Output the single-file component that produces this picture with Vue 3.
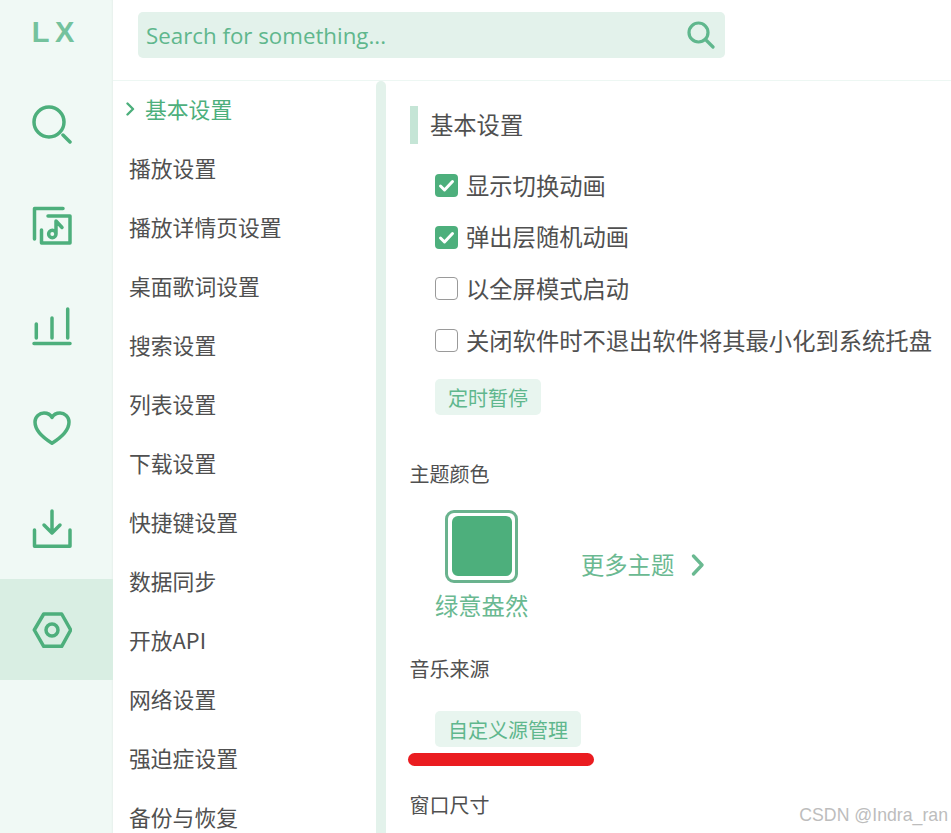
<template>
  <div class="app">
    <aside class="sidebar">
      <div class="logo">L X</div>
      <div
        v-for="item in navItems"
        :key="item.id"
        class="nav-item"
        :class="{ active: item.id === 'setting' }"
      >
        <svg class="nav-icon" viewBox="0 0 40 40" width="40" height="40">
          <path :d="item.d" />
        </svg>
      </div>
    </aside>

    <main class="main">
      <header class="topbar">
        <div class="search">
          <span class="search-text">Search for something...</span>
          <svg class="search-icon" viewBox="0 0 28 28" width="28" height="28">
            <path d="M11.500 2a9.500 9.500 0 1 0 0 19a9.500 9.500 0 1 0 0-19M18.500 18.500l7.500 7.500" />
          </svg>
        </div>
      </header>

      <div class="body">
        <nav class="menu">
          <div
            v-for="(name, index) in menuItems"
            :key="name"
            class="menu-item"
            :class="{ current: index === 0 }"
          >
            <svg v-if="index === 0" class="menu-arrow" viewBox="0 0 9 14" width="9" height="14">
              <path d="M1.500 1.500L7 7L1.500 12.500" />
            </svg>
            {{ name }}
          </div>
        </nav>
        <div class="scrollbar"></div>

        <section class="content">
          <h2 class="heading">基本设置</h2>

          <div class="checks">
            <label v-for="opt in options" :key="opt.label" class="check">
              <span class="box" :class="{ on: opt.on }">
                <svg v-if="opt.on" viewBox="0 0 23 23" width="23" height="23">
                  <path d="M5.500 12l4 4l8-8.500" />
                </svg>
              </span>
              <span class="check-text">{{ opt.label }}</span>
            </label>
          </div>
          <button class="btn timer-btn">定时暂停</button>

          <div class="label theme-label">主题颜色</div>
          <div class="themes">
            <div class="theme">
              <div class="swatch"><div class="swatch-fill"></div></div>
              <div class="theme-name">绿意盎然</div>
            </div>
            <div class="more">
              <span class="more-text">更多主题</span>
              <svg class="more-arrow" viewBox="0 0 14 22" width="14" height="22">
                <path d="M2.500 2L11 11L2.500 20" />
              </svg>
            </div>
          </div>

          <div class="label source-label">音乐来源</div>
          <button class="btn source-btn">自定义源管理</button>

          <div class="label size-label">窗口尺寸</div>
        </section>
      </div>
    </main>

    <div class="red-mark"></div>
    <div class="watermark">CSDN @Indra_ran</div>
  </div>
</template>

<script setup>
const navItems = [
  { id: 'search', d: 'M17 2a15 15 0 1 0 0 30a15 15 0 1 0 0-30M31 30l7 7' },
  {
    id: 'list',
    d: 'M2.500 33V2.500H31M16 10H38V37H9.500V24M24 28a3.700 3.700 0 1 1-7.400 0a3.700 3.700 0 1 1 7.400 0V15L30 21.500'
  },
  { id: 'top', d: 'M4.300 17V31M20 11V31M35.700 2V31M2 36.500H38' },
  {
    id: 'love',
    d: 'M20 35.200C14 31.500 3 24.500 3 14C3 8.500 7.500 5 12 5C15.500 5 18.500 6.700 20 9.500C21.500 6.700 24.500 5 28 5C32.500 5 37 8.500 37 14C37 24.500 26 31.500 20 35.200Z'
  },
  { id: 'download', d: 'M20 2V23.700M12 16L20 24L28 16M2.500 21V37.300H38V21' },
  {
    id: 'setting',
    d: 'M2.300 20L11.700 4H29.700L38.700 20L29.700 36.300H11.700ZM26 20a6 6 0 1 1-12 0a6 6 0 1 1 12 0'
  }
]

const menuItems = [
  '基本设置',
  '播放设置',
  '播放详情页设置',
  '桌面歌词设置',
  '搜索设置',
  '列表设置',
  '下载设置',
  '快捷键设置',
  '数据同步',
  '开放API',
  '网络设置',
  '强迫症设置',
  '备份与恢复'
]

const options = [
  { label: '显示切换动画', on: true },
  { label: '弹出层随机动画', on: true },
  { label: '以全屏模式启动', on: false },
  { label: '关闭软件时不退出软件将其最小化到系统托盘', on: false }
]
</script>

<style>
html, body { margin: 0; height: 100%; overflow: hidden; background: #fff; }
</style>

<style scoped>
.app {
  position: relative;
  display: flex;
  width: 951px;
  height: 833px;
  overflow: hidden;
  background: #fff;
  color: #505050;
  font-family: "Noto Sans CJK SC", "Noto Sans", sans-serif;
}
.sidebar {
  flex: none;
  width: 113px;
  background: #f0f9f5;
  box-shadow: inset -2px 0 2px -1px rgba(0, 0, 0, 0.04);
}
.logo {
  height: 64px;
  padding: 10px 7px 0 0;
  text-align: center;
  font: bold 29px/45px "Liberation Sans", sans-serif;
  color: #74c29d;
  word-spacing: -2px;
}
.nav-item {
  display: flex;
  align-items: center;
  justify-content: center;
  height: 101px;
  padding-right: 9px;
}
.nav-item.active { background: #d9eee3; }
.nav-icon path {
  fill: none;
  stroke: #4daf7c;
  stroke-width: 3.500;
  stroke-linecap: round;
  stroke-linejoin: round;
}
.main { flex: 1; display: flex; flex-direction: column; min-width: 0; }
.topbar {
  flex: none;
  height: 68px;
  padding: 12px 0 0 25px;
  border-bottom: 1px solid #edf7f3;
}
.search {
  display: flex;
  align-items: center;
  justify-content: space-between;
  width: 587px;
  height: 46px;
  padding: 0 10px 0 8px;
  box-sizing: border-box;
  border-radius: 5px;
  background: #e3f2eb;
}
.search-text {
  font-family: "Open Sans", sans-serif;
  font-size: 22.300px;
  color: #5fb78d;
}
.search-icon path {
  fill: none;
  stroke: #5fb78d;
  stroke-width: 3.200;
  stroke-linecap: round;
}
.body { flex: 1; display: flex; min-height: 0; }
.menu { flex: none; width: 263px; margin-top: -1.500px; }
.menu-item {
  display: flex;
  align-items: center;
  height: 58.950px;
  padding-left: 16px;
  font-size: 21.800px;
  white-space: nowrap;
}
.menu-item.current { padding-left: 13px; color: #4daf7c; }
.menu-arrow { margin-right: 10px; }
.menu-arrow path {
  fill: none;
  stroke: #4daf7c;
  stroke-width: 2.400;
  stroke-linecap: round;
  stroke-linejoin: round;
}
.scrollbar {
  flex: none;
  width: 10px;
  border-radius: 5px 5px 0 0;
  background: #e3f2eb;
}
.content { flex: 1; min-width: 0; padding: 25px 0 0 24px; }
.heading {
  display: flex;
  align-items: center;
  height: 38px;
  margin: 0;
  padding: 0 0 2px 12px;
  box-sizing: border-box;
  border-left: 8px solid #c5e5d6;
  font-size: 23.300px;
  font-weight: 400;
}
.checks { margin: 16px 0 0 25px; }
.check {
  display: flex;
  align-items: center;
  height: 51.600px;
  font-size: 23.300px;
  white-space: nowrap;
}
.check-text { margin-bottom: 2px; }
.box {
  flex: none;
  width: 23px;
  height: 23px;
  margin-right: 8px;
  box-sizing: border-box;
  border: 1px solid #9a9a9a;
  border-radius: 4px;
  background: #fff;
}
.box.on { border: 0; background: #4daf7c; }
.box svg { display: block; }
.box path {
  fill: none;
  stroke: #fff;
  stroke-width: 3;
  stroke-linecap: round;
  stroke-linejoin: round;
}
.btn {
  display: block;
  height: 36px;
  margin-left: 25px;
  padding: 1px 13px 0;
  border: 0;
  border-radius: 5px;
  background: #e8f5ef;
  color: #5fb78d;
  font: inherit;
  font-size: 20px;
  line-height: 35px;
}
.timer-btn { margin-top: 12.400px; }
.label { height: 30px; margin-left: -0.500px; font-size: 20px; line-height: 30px; }
.theme-label { margin-top: 44px; }
.themes { display: flex; align-items: center; margin: 21px 0 0 25px; }
.theme { width: 93px; }
.swatch {
  width: 73px;
  height: 73px;
  margin: 0 auto;
  padding: 3.500px;
  box-sizing: border-box;
  border: 3.500px solid #6ab38e;
  border-radius: 9px;
}
.swatch-fill { height: 100%; border-radius: 6px; background: #4daf7c; }
.theme-name {
  margin-top: 7px;
  padding-bottom: 1px;
  font-size: 23.300px;
  line-height: 30px;
  text-align: center;
  white-space: nowrap;
  color: #6ab991;
}
.more {
  display: flex;
  align-items: center;
  margin-left: 53px;
  font-size: 23.300px;
  color: #6ab991;
}
.more-text { margin-bottom: 2px; }
.more-arrow { margin-left: 17px; }
.more-arrow path {
  fill: none;
  stroke: #6ab991;
  stroke-width: 3.300;
  stroke-linecap: round;
  stroke-linejoin: round;
}
.source-label { margin-top: 33px; }
.source-btn { margin-top: 27px; }
.size-label { margin-top: 43px; }
.red-mark {
  position: absolute;
  left: 408px;
  top: 753px;
  width: 186px;
  height: 13px;
  border-radius: 7px;
  background: #ea1c20;
}
.watermark {
  position: absolute;
  right: 3px;
  top: 804px;
  font: 17.700px/22px "Liberation Sans", sans-serif;
  color: #bdbdbd;
}
</style>
